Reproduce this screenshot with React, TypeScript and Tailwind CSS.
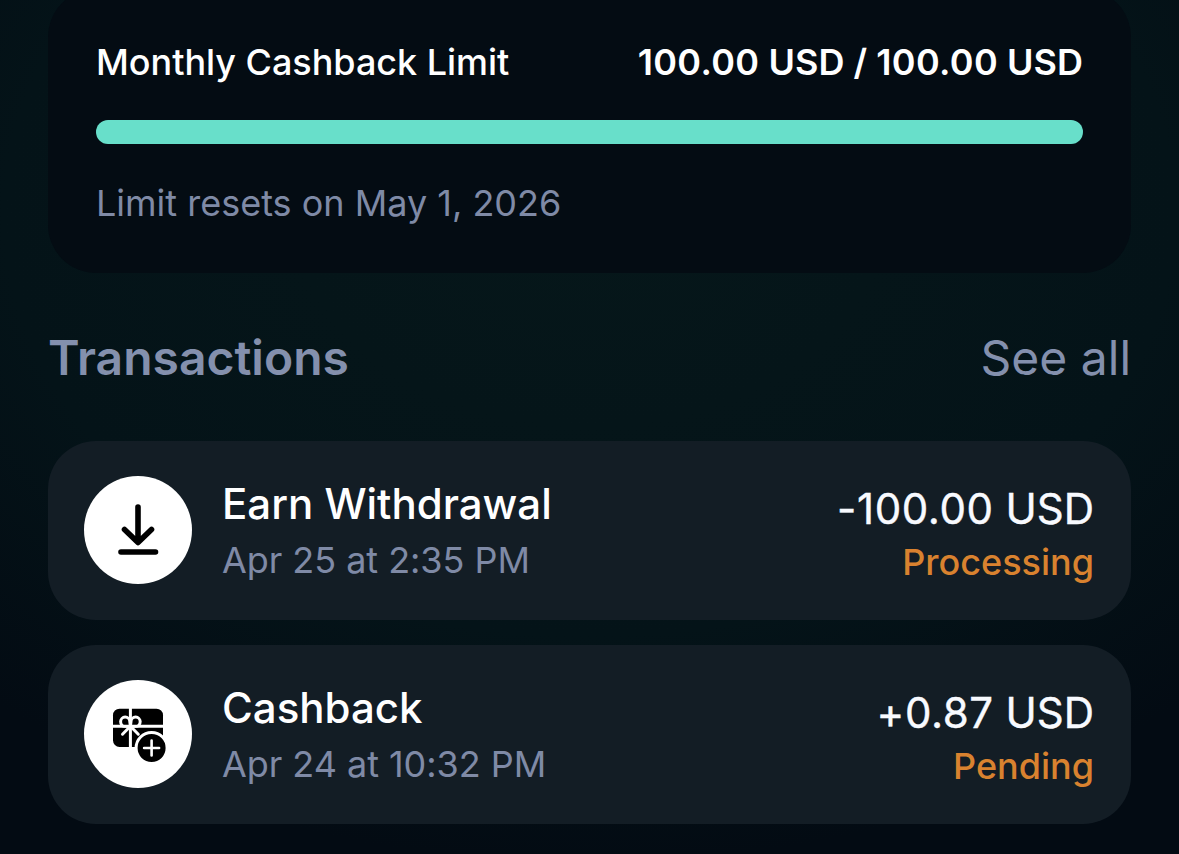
const Download = () => (
  <svg width="108" height="108" viewBox="0 0 108 108" fill="none" stroke="#000" strokeWidth="5.600" strokeLinecap="round" strokeLinejoin="round">
    <path d="M54 31V66M40.500 53.500L54 66.500L67.500 53.500M37 76H71.500" />
  </svg>
);

const Gift = () => (
  <svg width="108" height="108" viewBox="0 0 108 108" fill="none">
    <rect x="29" y="28.700" width="50" height="38.300" rx="6.500" fill="#000" />
    <path d="M29 46.300H79M46.400 28V67.500" stroke="#fff" strokeWidth="3" />
    <path d="M46.400 46.300L38.500 54.200M46.400 46.300L54.300 54.200" stroke="#fff" strokeWidth="3" strokeLinecap="round" />
    <path d="M46.400 46.300H41A4.600 4.600 0 1 1 45.800 41.500ZM46.400 46.300H51.800A4.600 4.600 0 1 0 47 41.500Z" stroke="#fff" strokeWidth="3" fill="#000" />
    <circle cx="67.600" cy="68" r="15.500" fill="#000" stroke="#fff" strokeWidth="3" />
    <path d="M67.600 60.500V75.500M60.100 68H75.100" stroke="#fff" strokeWidth="2.600" strokeLinecap="round" />
  </svg>
);

const rows = [
  { title: "Earn Withdrawal", date: "Apr 25 at 2:35 PM", amount: "-100.00", status: "Processing", icon: <Download /> },
  { title: "Cashback", date: "Apr 24 at 10:32 PM", amount: "+0.87", status: "Pending", icon: <Gift /> },
];

export default function App() {
  return (
    <main className="h-[854px] w-[1179px] overflow-hidden bg-[#030b13] bg-[radial-gradient(ellipse_900px_650px_at_50%_25%,#06171a_0%,#041318_65%,#030b13_100%)] px-12 font-['Inter',sans-serif] whitespace-nowrap">
      <section className="-mt-[11px] h-[284px] rounded-[48px] bg-[#040c13] px-12 pt-[49px]">
        <div className="flex justify-between text-[36px] leading-[48px] font-medium text-white">
          <span className="tracking-[-0.03px]">Monthly Cashback Limit</span>
          <span className="font-semibold">
            <span className="tracking-[0.350px]">100.00</span> USD / <span className="tracking-[0.350px]">100.00</span> USD
          </span>
        </div>
        <div className="mt-[34px] h-6 rounded-full bg-[#68dfca]" />
        <p className="mt-[35px] text-[36px] leading-[48px] text-[#7f8aa6]">Limit resets on May 1, 2026</p>
      </section>
      <header className="mt-[55px] flex justify-between text-[48px] leading-[60px] text-[#8490ad]">
        <h2 className="font-semibold">Transactions</h2>
        <span>See all</span>
      </header>
      <div className="mt-[53px] flex flex-col gap-[25px]">
        {rows.map((r) => (
          <article key={r.title} className="flex h-[179px] items-start rounded-[48px] bg-[#131d25] pt-[35px] pr-[37px] pl-9">
            <div className="size-[108px] rounded-full bg-white">{r.icon}</div>
            <div className="ml-[30px]">
              <div className="text-[42px] leading-[56px] font-medium text-white">{r.title}</div>
              <div className="text-[36px] leading-[56px] tracking-[-0.05px] text-[#7f8aa6]">{r.date}</div>
            </div>
            <div className="mt-[6px] ml-auto text-right">
              <div className="text-[42px] leading-[54px] text-[#f8faff] [-webkit-text-stroke:0.4px_#f8faff]">
                <span className="tracking-[0.600px]">{r.amount}</span> USD
              </div>
              <div className="text-[36px] leading-[52px] font-medium text-[#d9822f]">{r.status}</div>
            </div>
          </article>
        ))}
      </div>
    </main>
  );
}
